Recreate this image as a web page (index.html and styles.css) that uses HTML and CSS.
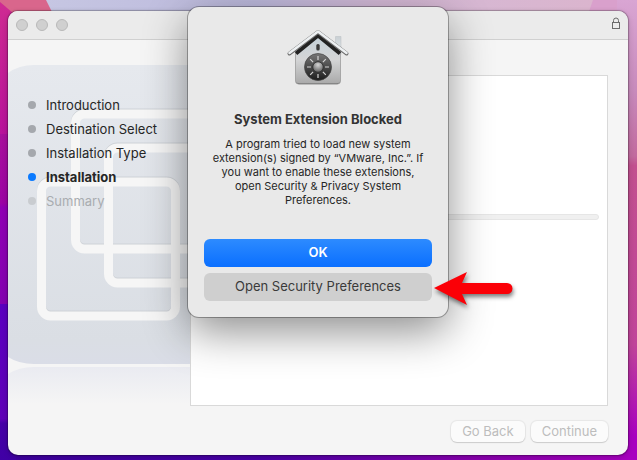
FILE: index.html
```html
<!DOCTYPE html>
<html lang="en">
<head>
    <meta charset="UTF-8">
    <meta name="viewport" content="width=device-width, initial-scale=1.0">
    <title>Install VMware Tools</title>
    <link rel="stylesheet" href="styles.css">
</head>
<body>
    <svg class="wallpaper" viewBox="0 0 637 460" preserveAspectRatio="none" aria-hidden="true">
        <defs>
            <linearGradient id="skyTop" x1="0" x2="1" y1="0" y2="0">
                <stop offset="0" stop-color="#c8c9e4"/>
                <stop offset=".4" stop-color="#bcb9dc"/>
                <stop offset=".6" stop-color="#d4b9d6"/>
                <stop offset="1" stop-color="#dcb4cc"/>
            </linearGradient>
            <linearGradient id="leftSide" x1="0" x2="0" y1="0" y2="1">
                <stop offset="0" stop-color="#cf2b92"/>
                <stop offset=".29" stop-color="#b8129b"/>
                <stop offset=".29" stop-color="#a8109c"/>
                <stop offset=".44" stop-color="#9c04a4"/>
                <stop offset=".45" stop-color="#9000b4"/>
                <stop offset=".66" stop-color="#8400b0"/>
                <stop offset=".66" stop-color="#5a00c0"/>
                <stop offset=".91" stop-color="#6000b8"/>
                <stop offset=".92" stop-color="#4600a8"/>
                <stop offset="1" stop-color="#4000a5"/>
            </linearGradient>
            <linearGradient id="rightSide" x1="0" x2="0" y1="0" y2="1">
                <stop offset="0" stop-color="#d9a5d3"/>
                <stop offset=".2" stop-color="#c78abb"/>
                <stop offset=".34" stop-color="#c26a9e"/>
                <stop offset=".36" stop-color="#c2508f"/>
                <stop offset=".75" stop-color="#c0449a"/>
                <stop offset=".95" stop-color="#a800c0"/>
            </linearGradient>
            <linearGradient id="floor" x1="0" x2="1" y1="0" y2="0">
                <stop offset="0" stop-color="#3e00a0"/>
                <stop offset=".4" stop-color="#4a00a8"/>
                <stop offset=".75" stop-color="#8a00b0"/>
                <stop offset="1" stop-color="#a800c0"/>
            </linearGradient>
        </defs>
        <rect width="637" height="460" fill="url(#skyTop)"/>
        <rect y="1" width="20" height="459" fill="url(#leftSide)"/>
        <path d="M0 0H46L58 24H26L0 2z" fill="#d9668c"/>
        <path d="M593 0H637V20H586z" fill="#d9a0cc"/>
        <rect x="617" width="20" height="460" fill="url(#rightSide)"/>
        <rect x="16" y="450" width="608" height="10" fill="url(#floor)"/>
    </svg>

    <main class="window">
        <header class="titlebar">
            <span class="light"></span>
            <span class="light"></span>
            <span class="light"></span>
            <svg class="lock" width="10" height="13" viewBox="0 0 10 13" fill="none" stroke="#6b6b6b" aria-hidden="true">
                <rect x="1.500" y="5.500" width="7" height="6"/>
                <path d="M2.500 5.500V3.500a2.500 2.500 0 0 1 5 0V5.500"/>
            </svg>
        </header>

        <div class="content">
            <aside class="sidebar">
                <svg class="art" width="182" height="380" viewBox="0 0 182 380" aria-hidden="true">
                    <defs>
                        <linearGradient id="panel" x1="0" x2="0" y1="0" y2="1">
                            <stop offset="0" stop-color="#e6e9ee"/>
                            <stop offset=".92" stop-color="#dadee4"/>
                            <stop offset="1" stop-color="#dadde7"/>
                        </linearGradient>
                        <linearGradient id="reflection" x1="0" x2="0" y1="0" y2="1">
                            <stop offset="0" stop-color="#eaebf1"/>
                            <stop offset="1" stop-color="#f5f5f5"/>
                        </linearGradient>
                    </defs>
                    <path d="M0 33Q11 25 26 25H182V324H26Q11 324 0 317z" fill="url(#panel)"/>
                    <path d="M0 334Q11 327 26 327H182V364H0z" fill="url(#reflection)"/>
                    <g fill="none" stroke="#ced2d7" stroke-width="9">
                        <rect x="67.500" y="73" width="135" height="135" rx="9"/>
                        <rect x="100.500" y="107" width="135" height="135" rx="9"/>
                        <rect x="33.500" y="141" width="134" height="134" rx="9"/>
                    </g>
                    <g fill="none" stroke="#f6f6f6" stroke-width="9">
                        <rect x="67.500" y="74" width="135" height="135" rx="9"/>
                        <rect x="100.500" y="108" width="135" height="135" rx="9"/>
                        <rect x="33.500" y="142" width="134" height="134" rx="9"/>
                    </g>
                </svg>
                <ol class="steps">
                    <li>Introduction</li>
                    <li>Destination Select</li>
                    <li>Installation Type</li>
                    <li class="current">Installation</li>
                    <li class="pending">Summary</li>
                </ol>
            </aside>
            <section class="pane">
                <div class="progress"></div>
            </section>
        </div>

        <footer class="actions">
            <button type="button" disabled>Go Back</button>
            <button type="button" disabled>Continue</button>
        </footer>

        <div class="alert" role="alertdialog" aria-labelledby="alertTitle">
            <svg class="alert-icon" width="64" height="64" viewBox="0 0 64 64" aria-hidden="true">
                <defs>
                    <linearGradient id="wall" x1="0" x2="0" y1="0" y2="1">
                        <stop offset="0" stop-color="#c3d0d8"/>
                        <stop offset=".5" stop-color="#d4d5d6"/>
                        <stop offset="1" stop-color="#a9a9a9"/>
                    </linearGradient>
                    <linearGradient id="chimney" x1="0" x2="0" y1="0" y2="1">
                        <stop offset="0" stop-color="#c9d0d4"/>
                        <stop offset="1" stop-color="#e6e9ec"/>
                    </linearGradient>
                    <linearGradient id="dial" x1="0" x2="0" y1="0" y2="1">
                        <stop offset="0" stop-color="#777"/>
                        <stop offset="1" stop-color="#1c1c1c"/>
                    </linearGradient>
                    <radialGradient id="knob" cx=".5" cy=".3" r=".7">
                        <stop offset="0" stop-color="#d5d5d5"/>
                        <stop offset="1" stop-color="#5c5c5c"/>
                    </radialGradient>
                </defs>
                <path d="M49.500 9.500h5.500v18h-5.500z" fill="url(#chimney)" stroke="#b9bec2" stroke-width=".5"/>
                <path d="M9.500 26L32 8L54.500 26V54a3 3 0 0 1-3 3H12.500a3 3 0 0 1-3-3z" fill="url(#wall)" stroke="#949494" stroke-width=".7"/>
                <path d="M11 55.700q.5 1 2 1h38q1.500 0 2-1" fill="none" stroke="#808080"/>
                <path d="M10 26.500L32 8.500L54 26.500" fill="none" stroke="#222" stroke-width="4"/>
                <path d="M3.500 26.500L32 5L60.500 26.500" fill="none" stroke="#6b6b6b" stroke-width="4" stroke-linecap="round" stroke-linejoin="round"/>
                <path d="M3.500 26L32 4.500L60.500 26" fill="none" stroke="#edf0f2" stroke-width="2.600" stroke-linecap="round" stroke-linejoin="round"/>
                <rect x="30.300" y="17" width="3.400" height="6.500" rx="1.500" fill="#3a3a3a"/>
                <circle cx="32" cy="40" r="13.500" fill="url(#dial)" stroke="#444" stroke-width=".7"/>
                <path d="M32 29v4M32 47v4M21 40h4M39 40h4M24.200 32.200l2.900 2.900M36.900 44.900l2.900 2.900M24.200 47.800l2.900-2.900M36.900 35.100l2.900-2.900" stroke="#d4d4d4" stroke-width="1.200"/>
                <circle cx="32" cy="40" r="5.300" fill="url(#knob)" stroke="#333"/>
            </svg>
            <h1 id="alertTitle">System Extension Blocked</h1>
            <p>A program tried to load new system extension(s) signed by “VMware, Inc.”. If you want to enable these extensions, open Security &amp; Privacy System Preferences.</p>
            <div class="alert-buttons">
                <button type="button" class="primary">OK</button>
                <button type="button">Open Security Preferences</button>
            </div>
            <svg class="arrow" width="84" height="40" viewBox="0 0 84 40" aria-hidden="true">
                <path d="M1 17L34 1L29 12H74a5 5 0 0 1 0 11H29L34 34z" fill="#fb0007"/>
            </svg>
        </div>
    </main>
</body>
</html>
```
FILE: styles.css
```css
* {
    box-sizing: border-box;
}
body {
    display: flex;
    min-height: 100vh;
    margin: 0;
    padding: 11px 9px 5px 8px;
    font-family: Inter, "Liberation Sans", sans-serif;
    font-size: 13px;
    line-height: 16px;
    color: #262626;
    background-color: #b9b5da;
}
.wallpaper {
    position: absolute;
    inset: 0;
    width: 100%;
    height: 100%;
    z-index: -1;
}
.window {
    position: relative;
    display: flex;
    flex-direction: column;
    flex: 1;
    background-color: #f5f5f5;
    border-radius: 10px;
    box-shadow: 0 0 1px 1px rgba(0, 0, 0, 0.25), 0 2px 6px rgba(0, 0, 0, 0.2);
}
.titlebar {
    display: flex;
    align-items: center;
    gap: 8px;
    height: 29px;
    padding: 0 7px 0 8px;
    background-color: #ebebeb;
    border-bottom: 1px solid #d0d0d0;
    border-radius: 10px 10px 0 0;
}
.light {
    width: 12px;
    height: 12px;
    background-color: #d0d0d0;
    border: 1px solid #b9b9b9;
    border-radius: 50%;
}
.lock {
    margin-left: auto;
    margin-bottom: 4px;
}
.content {
    display: flex;
    flex: 1;
    padding-right: 20px;
}
.sidebar {
    position: relative;
    width: 182px;
}
.art {
    position: absolute;
    top: 0;
    left: 0;
}
.steps {
    position: relative;
    margin: 0;
    padding: 53px 0 0 20px;
    list-style: none;
}
.steps li {
    display: flex;
    align-items: center;
    gap: 10px;
    height: 24px;
}
.steps li::before {
    content: "";
    width: 8px;
    height: 8px;
    border-radius: 50%;
    background-color: #a5a8ad;
}
.steps .current {
    font-weight: 700;
}
.steps .current::before {
    background-color: #0a7aff;
}
.steps .pending {
    color: #a9acb0;
}
.steps .pending::before {
    background-color: #c9ccd0;
}
.pane {
    flex: 1;
    margin-top: 35px;
    padding: 138px 8px 0;
    background-color: #fff;
    border: 1px solid #d9d9d9;
}
.progress {
    height: 6px;
    background-color: #f0f0f0;
    border: 1px solid #e6e6e6;
    border-radius: 3px;
}
.actions {
    display: flex;
    justify-content: flex-end;
    gap: 6px;
    padding: 15px 20px 13px;
}
button {
    padding: 0 0 2px;
    font: inherit;
    border: none;
    border-radius: 6px;
}
.actions button {
    height: 21px;
    padding: 0 11px 2px;
    color: #bdbdbd;
    background-color: #fbfbfb;
    box-shadow: 0 0 1px 1px rgba(0, 0, 0, 0.06), 0 1px 1px rgba(0, 0, 0, 0.12);
}
.alert {
    position: absolute;
    top: -4px;
    left: 50%;
    width: 260px;
    margin-left: -130px;
    padding: 20px 16px 16px;
    text-align: center;
    background-color: #e9e9e9;
    border-radius: 11px;
    box-shadow: 0 0 0 1px rgba(0, 0, 0, 0.3), 0 14px 44px rgba(0, 0, 0, 0.45);
}
.alert-icon {
    display: block;
    margin: 0 auto;
}
.alert h1 {
    margin: 20px 0 10px;
    font-size: 13px;
    line-height: 16px;
    color: #333;
}
.alert p {
    margin: 0 0 32px;
    padding: 0 4px;
    font-size: 11px;
    line-height: 14px;
}
.alert-buttons {
    display: grid;
    gap: 6px;
}
.alert-buttons button {
    height: 28px;
    color: #3a3a3a;
    background-color: #cfcfcf;
}
.alert-buttons .primary {
    font-weight: 600;
    color: #fff;
    background: linear-gradient(#2d8bff, #0a6fff);
}
.arrow {
    position: absolute;
    right: -69px;
    bottom: 6px;
    filter: drop-shadow(1px 3px 2px rgba(0, 0, 0, 0.5));
}
```
